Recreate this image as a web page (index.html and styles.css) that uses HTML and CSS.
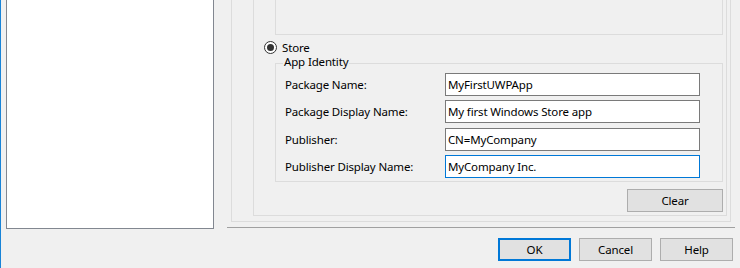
FILE: index.html
```html
<!DOCTYPE html>
<html lang="en">
<head>
    <meta charset="UTF-8">
    <title>Packaging options</title>
    <link rel="stylesheet" href="styles.css">
</head>
<body>
    <div class="dialog">
        <div class="list-col">
            <div class="listbox"></div>
        </div>

        <div class="main-col">
            <div class="group outer">
                <div class="group inner">
                    <div class="frame top-frame"></div>

                    <label class="radio-row">
                        <span class="radio checked"></span>
                        Store
                    </label>

                    <div class="frame identity">
                        <div class="caption">App Identity</div>
                        <div class="fields">
                            <div class="field">
                                <span class="field-label">Package Name:</span>
                                <input class="textbox" type="text" value="MyFirstUWPApp">
                            </div>
                            <div class="field">
                                <span class="field-label">Package Display Name:</span>
                                <input class="textbox" type="text" value="My first Windows Store app">
                            </div>
                            <div class="field wide-gap">
                                <span class="field-label">Publisher:</span>
                                <input class="textbox" type="text" value="CN=MyCompany">
                            </div>
                            <div class="field">
                                <span class="field-label">Publisher Display Name:</span>
                                <input class="textbox focused" type="text" value="MyCompany Inc.">
                            </div>
                        </div>
                    </div>

                    <div class="clear-row">
                        <button class="btn clear">Clear</button>
                    </div>
                </div>
            </div>

            <div class="separator"></div>

            <div class="buttons">
                <button class="btn default">OK</button>
                <button class="btn">Cancel</button>
                <button class="btn">Help</button>
            </div>
        </div>
    </div>
</body>
</html>
```

FILE: styles.css
```css
* {
    box-sizing: border-box;
}
body {
    margin: 0;
    background-color: #f0f0f0;
    font-family: 'Noto Sans', 'Open Sans', sans-serif;
    font-size: 11.5px;
    letter-spacing: -0.15px;
    color: #000;
}
.dialog {
    display: flex;
    width: 740px;
    height: 268px;
    overflow: hidden;
    border-left: 1px solid #1883d7;
}
.list-col {
    padding-left: 5px;
    margin-right: 13px;
}
.listbox {
    width: 208px;
    height: 229px;
    background: white;
    border: 1px solid #828790;
    border-top: none;
}
.main-col {
    width: 508px;
    display: flex;
    flex-direction: column;
}
.group {
    border: 1px solid #dcdcdc;
    border-top: none;
}
.outer {
    margin-left: 4px;
    width: 500px;
    height: 222px;
    padding: 0 3px 5px 21px;
}
.inner {
    height: 216px;
    padding: 0 3px 0 21px;
    display: flex;
    flex-direction: column;
}
.frame {
    border: 1px solid #dcdcdc;
}
.top-frame {
    height: 35px;
    border-top: none;
}
.radio-row {
    display: flex;
    align-items: center;
    height: 13px;
    margin: 6px 0 0 -11px;
    line-height: 13px;
}
.radio {
    width: 13px;
    height: 13px;
    margin-right: 5px;
    border: 1px solid #333;
    border-radius: 50%;
    background: white;
    display: flex;
    align-items: center;
    justify-content: center;
}
.radio.checked::after {
    content: "";
    width: 7px;
    height: 7px;
    border-radius: 50%;
    background: #333;
}
.identity {
    margin-top: 9px;
    padding: 0 0 3px 9px;
}
.caption {
    width: fit-content;
    margin: -9px 0 0 -2px;
    padding: 0 1px;
    line-height: 14px;
    background: #f0f0f0;
}
.fields {
    margin-top: 4px;
    display: flex;
    flex-direction: column;
    gap: 4px;
}
.field {
    display: flex;
    align-items: center;
    height: 23px;
}
.field.wide-gap {
    margin-top: 1px;
}
.field-label {
    width: 160px;
}
.textbox {
    width: 255px;
    height: 23px;
    margin: 0;
    padding: 0 2px;
    border: 1px solid #7a7a7a;
    background: white;
    font: inherit;
    letter-spacing: inherit;
    color: #000;
    outline: none;
}
.textbox.focused {
    border-color: #0078d7;
}
.clear-row {
    margin-top: 7px;
    display: flex;
    justify-content: flex-end;
}
.btn {
    width: 73px;
    height: 23px;
    padding: 0;
    background: #e1e1e1;
    border: 1px solid #adadad;
    font: inherit;
    letter-spacing: inherit;
    color: #000;
}
.btn.clear {
    width: 96px;
}
.btn.default {
    border: 2px solid #0078d7;
}
.separator {
    margin-top: 5px;
    height: 1px;
    background: #a0a0a0;
}
.buttons {
    margin-top: 10px;
    padding-right: 2px;
    display: flex;
    justify-content: flex-end;
    gap: 8px;
}
```
